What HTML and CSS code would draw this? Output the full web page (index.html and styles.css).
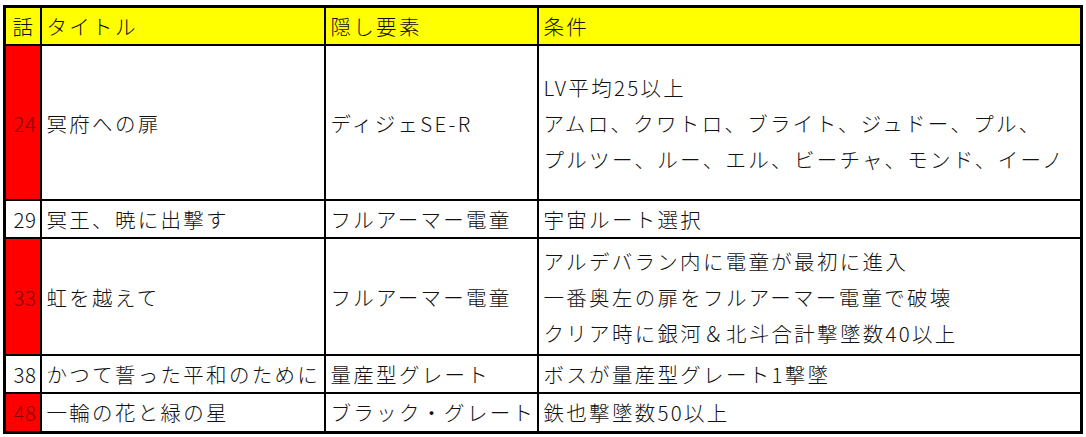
FILE: index.html
```html
<!DOCTYPE html>
<html lang="ja">
<head>
<meta charset="utf-8">
<link rel="stylesheet" href="styles.css">
</head>
<body>
<table class="sheet">
  <colgroup>
    <col class="c-no">
    <col class="c-title">
    <col class="c-hidden">
    <col class="c-cond">
  </colgroup>
  <thead>
    <tr class="r-head">
      <th class="no">話</th>
      <th>タイトル</th>
      <th>隠し要素</th>
      <th>条件</th>
    </tr>
  </thead>
  <tbody>
    <tr class="r1">
      <td class="no red">24</td>
      <td>冥府への扉</td>
      <td>ディジェSE-R</td>
      <td class="multi">LV平均25以上<br>アムロ、クワトロ、ブライト、ジュドー、プル、<br>プルツー、ルー、エル、ビーチャ、モンド、イーノ</td>
    </tr>
    <tr class="r2">
      <td class="no">29</td>
      <td>冥王、暁に出撃す</td>
      <td>フルアーマー電童</td>
      <td>宇宙ルート選択</td>
    </tr>
    <tr class="r3">
      <td class="no red">33</td>
      <td>虹を越えて</td>
      <td>フルアーマー電童</td>
      <td class="multi">アルデバラン内に電童が最初に進入<br>一番奥左の扉をフルアーマー電童で破壊<br>クリア時に銀河＆北斗合計撃墜数40以上</td>
    </tr>
    <tr class="r4">
      <td class="no">38</td>
      <td>かつて誓った平和のために</td>
      <td>量産型グレート</td>
      <td>ボスが量産型グレート1撃墜</td>
    </tr>
    <tr class="r5">
      <td class="no red">48</td>
      <td>一輪の花と緑の星</td>
      <td>ブラック・グレート</td>
      <td>鉄也撃墜数50以上</td>
    </tr>
  </tbody>
</table>
</body>
</html>
```

FILE: styles.css
```css
html, body {
  margin: 0;
  padding: 0;
  background: #ffffff;
}

body {
  padding: 5px 0 0 3px;
  font-family: "Noto Sans CJK JP", "Noto Sans", sans-serif;
  font-weight: 300;
  color: #111111;
}

.sheet {
  border-collapse: collapse;
  table-layout: fixed;
  width: 1077px;
  border: 3px solid #000;
}

.c-no { width: 36px; }
.c-title { width: 284px; }
.c-hidden { width: 213px; }
.c-cond { width: 544px; }

.sheet th,
.sheet td {
  border: 2px solid #000;
  padding: 0 0 0 5px;
  font-size: 20.5px;
  line-height: 36px;
  font-weight: 300;
  text-align: left;
  vertical-align: middle;
  white-space: nowrap;
  overflow: hidden;
  letter-spacing: 2.3px;
}

.sheet th {
  background: #ffff00;
}

.sheet .no {
  text-align: right;
  padding: 0 3px 0 0;
  letter-spacing: 0.5px;
}

.sheet th.no {
  text-align: center;
  padding: 0;
  letter-spacing: 0;
}

.sheet .red {
  background: #ff0000;
  color: #8a0000;
}

.multi {
  line-height: 36px;
}

.r-head { height: 38px; }
.r1 { height: 155px; }
.r2 { height: 38px; }
.r3 { height: 117px; }
.r4 { height: 37px; }
.r5 { height: 39px; }
```
